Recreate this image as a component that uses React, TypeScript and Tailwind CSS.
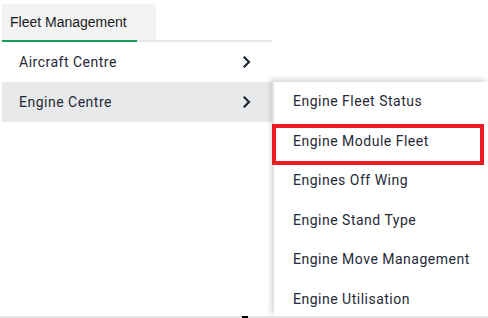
import React from "react";

const Chevron = () => (
  <svg width="10" height="12" viewBox="0 0 10 12" fill="none">
    <path d="M2.5 1.5L7 6L2.5 10.5" stroke="#1f2937" strokeWidth="2.2" strokeLinecap="square" />
  </svg>
);

const subItems = [
  "Engine Fleet Status",
  "Engine Module Fleet",
  "Engines Off Wing",
  "Engine Stand Type",
  "Engine Move Management",
  "Engine Utilisation",
];

export default function App() {
  return (
    <div className="relative w-[488px] h-[318px] bg-white overflow-hidden">
      <div className="pt-[4px] pl-[2px]">
        <div
          className="w-[154px] h-[36px] bg-[#f2f3f5] flex items-center pl-[8px] text-[14px] text-[#1a1a1a]"
          style={{ fontFamily: '"Liberation Sans", Arial, sans-serif' }}
        >
          Fleet Management
        </div>
        <div className="flex w-[270px]">
          <div className="w-[135px] h-[2px] bg-[#0f9d58]" />
          <div className="flex-1 h-[2px] bg-[#e5e7eb]" />
        </div>
        <div
          className="w-[270px] text-[14px] tracking-[0.5px] text-[#1f2937]"
          style={{ fontFamily: 'Roboto, "Noto Sans", sans-serif' }}
        >
          <div className="h-[40px] flex items-center justify-between pl-[17px] pr-[20px]">
            <span>Aircraft Centre</span>
            <Chevron />
          </div>
          <div className="h-[40px] flex items-center justify-between pl-[17px] pr-[20px] bg-[#e8e9eb]">
            <span>Engine Centre</span>
            <Chevron />
          </div>
        </div>
      </div>

      <div
        className="absolute left-[274px] top-[82px] w-[214px] h-[234px] bg-white shadow-[-3px_-3px_5px_rgba(0,0,0,0.16)] text-[14px] tracking-[0.5px] text-[#1f2937]"
        style={{ fontFamily: 'Roboto, "Noto Sans", sans-serif' }}
      >
        {subItems.map((t) => (
          <div key={t} className="h-[39.5px] flex items-center pl-[19px]">
            {t}
          </div>
        ))}
      </div>

      <div className="absolute left-[272px] top-[124px] w-[212px] h-[41px] border-[4px] border-[#ed1c24]" />

      <div className="absolute left-0 top-[316px] w-[488px] h-[2px] bg-[#e5e7eb]" />
      <div className="absolute left-[242px] top-[316px] w-[6px] h-[2px] bg-black" />
    </div>
  );
}
